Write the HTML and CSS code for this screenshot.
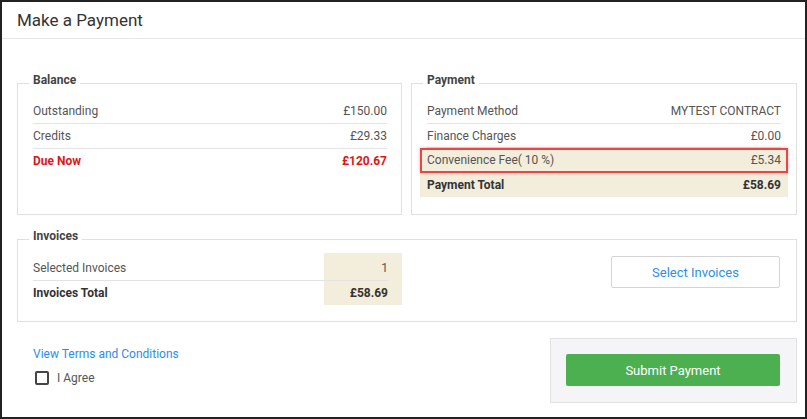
FILE: index.html
```html
<!DOCTYPE html>
<html>
<head>
<meta charset="utf-8">
<link rel="stylesheet" href="styles.css">
</head>
<body>
<div class="frame">
  <div class="header">Make a Payment</div>
  <div class="content">
    <div class="top-row">
      <fieldset class="box box-balance">
        <legend>Balance</legend>
        <div class="rows">
          <div class="row"><div class="row-in"><span>Outstanding</span><span>£150.00</span></div></div>
          <div class="row"><div class="row-in"><span>Credits</span><span>£29.33</span></div></div>
          <div class="row due"><div class="row-in last"><span>Due Now</span><span>£120.67</span></div></div>
        </div>
      </fieldset>
      <fieldset class="box box-payment">
        <legend>Payment</legend>
        <div class="rows pay-rows">
          <div class="row"><div class="row-in"><span>Payment Method</span><span>MYTEST CONTRACT</span></div></div>
          <div class="row"><div class="row-in last"><span>Finance Charges</span><span>£0.00</span></div></div>
          <div class="row hl fee"><div class="row-in last"><span>Convenience Fee( 10 %)</span><span>£5.34</span></div></div>
          <div class="row hl total"><div class="row-in last"><span>Payment Total</span><span>£58.69</span></div></div>
        </div>
      </fieldset>
    </div>
    <fieldset class="box box-invoices">
      <legend>Invoices</legend>
      <div class="inv-body">
        <div class="inv-left">
          <div class="row-in"><span>Selected Invoices</span><span>1</span></div>
          <div class="row-in last total"><span>Invoices Total</span><span>£58.69</span></div>
        </div>
        <div class="inv-right">
          <button class="btn-select">Select Invoices</button>
        </div>
      </div>
    </fieldset>
    <div class="bottom-row">
      <div class="terms">
        <a class="terms-link" href="#">View Terms and Conditions</a>
        <label class="agree"><span class="check"></span><span>I Agree</span></label>
      </div>
      <div class="submit-panel">
        <button class="btn-submit">Submit Payment</button>
      </div>
    </div>
  </div>
</div>
</body>
</html>
```
FILE: styles.css
```css
* { box-sizing: border-box; }
html, body { margin: 0; padding: 0; background: #fff; }
body {
  font-family: Roboto, "Liberation Sans", Arial, sans-serif;
  font-size: 12px;
  color: #555;
}
.frame {
  width: 807px;
  height: 419px;
  border: 2px solid #222;
  overflow: hidden;
}
.header {
  height: 37px;
  line-height: 36px;
  padding-left: 15px;
  font-size: 17px;
  color: #333;
  border-bottom: 1px solid #e6e6e6;
}
.content {
  padding: 33px 8px 0 15px;
}
.top-row {
  display: flex;
  gap: 9px;
}
.box {
  margin: 0;
  padding: 0;
  border: 1px solid #e0e0e0;
  min-width: 0;
}
.box legend {
  margin-left: 11px;
  padding: 0 4px 6px;
  font-weight: 700;
  font-size: 12px;
  line-height: 16px;
  color: #444;
}
.box-balance { width: 385px; }
.box-payment { width: 386px; }
.rows {
  padding: 5px 14px 40px 15px;
}
.pay-rows {
  padding: 5px 8px 17px 8px;
}
.pay-rows .row { padding: 0 7px 0 7px; }
.pay-rows .row:first-child .row-in,
.pay-rows .row:nth-child(2) .row-in { border-bottom: 1px solid #e3e3e3; }
.row-in {
  display: flex;
  justify-content: space-between;
  align-items: center;
  height: 25px;
  border-bottom: 1px solid #e3e3e3;
}
.row-in.last { border-bottom: none; height: 24px; }
.due .row-in { color: #e31414; font-weight: 700; }
.hl { background: #f3eddb; }
.fee {
  height: 25px;
  outline: 2px solid #e84545;
  outline-offset: -2px;
  box-shadow: 0 0 3px rgba(232, 69, 69, 0.45);
  position: relative;
}
.total .row-in, .row-in.total { font-weight: 700; color: #333; }
.box-invoices {
  margin-top: 13px;
  width: 780px;
}
.inv-body {
  display: flex;
  justify-content: space-between;
  align-items: flex-start;
  padding-top: 3px;
}
.inv-left {
  width: 385px;
  padding: 3px 15px 16px 15px;
  background: linear-gradient(#f3eddb, #f3eddb) no-repeat;
  background-position: 306px 0;
  background-size: 78px 52px;
}
.inv-left .row-in { height: 25px; }
.inv-left .row-in.last { height: 24px; }
.inv-right {
  padding: 3px 16px 0 0;
}
.btn-select {
  width: 169px;
  height: 32px;
  background: #fff;
  border: 1px solid #d4d4d4;
  border-radius: 2px;
  color: #2a8fe8;
  font-family: inherit;
  font-size: 13px;
  padding: 0;
}
.bottom-row {
  display: flex;
  justify-content: space-between;
  margin-top: 16px;
}
.terms {
  padding: 8px 0 0 16px;
  display: flex;
  flex-direction: column;
  align-items: flex-start;
}
.terms-link {
  color: #2a8fe8;
  text-decoration: none;
  font-size: 12px;
  line-height: 16px;
}
.agree {
  display: flex;
  align-items: center;
  margin-top: 9px;
  margin-left: 2px;
  color: #555;
  font-size: 12px;
}
.check {
  width: 14px;
  height: 14px;
  border: 2px solid #444;
  border-radius: 2px;
  margin-right: 8px;
}
.submit-panel {
  width: 247px;
  height: 65px;
  background: #f5f5f7;
  border: 1px solid #e2e2e2;
  padding: 15px 16px 0 15px;
}
.btn-submit {
  width: 100%;
  height: 32px;
  background: #4caf50;
  border: none;
  border-radius: 2px;
  color: #fff;
  font-family: inherit;
  font-size: 13px;
  padding: 0;
}
```
